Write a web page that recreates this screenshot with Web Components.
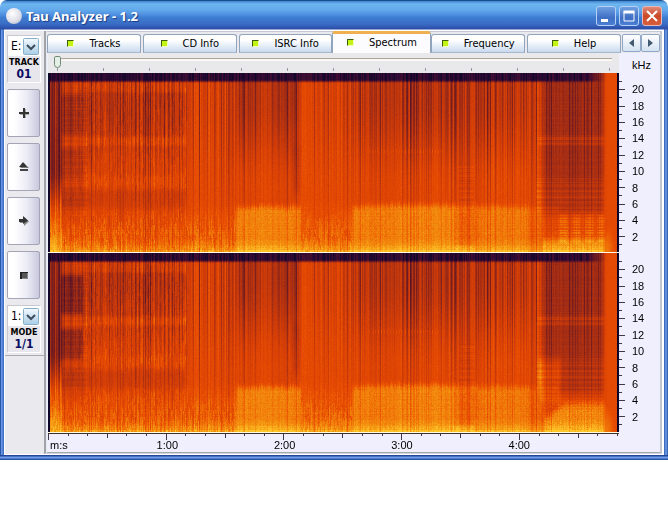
<!DOCTYPE html>
<html lang="en">
<head>
<meta charset="utf-8">
<title>Tau Analyzer - 1.2</title>
<style>
  body { margin: 0; background: #fff; color: #000; font: 11px/16px "DejaVu Sans Condensed", "DejaVu Sans", sans-serif; }
</style>
</head>
<body>
<tau-window heading="Tau Analyzer - 1.2">
  <tau-sidebar slot="side">
    <tau-picker value="E:" caption="TRACK" count="01"></tau-picker>
    <tau-tool label="Add"><svg width="12" height="12" viewBox="0 0 12 12"><path d="M5 2h3v3h3v3H8v3H5V8H2V5h3z" fill="#aaa"/><path d="M5 1h2v4h4v2H7v4H5V7H1V5h4z" fill="#333"/></svg></tau-tool>
    <tau-tool label="Eject"><svg width="12" height="12" viewBox="0 0 12 12"><path d="M6 2l5 5H2z" fill="#777"/><path d="M5 1l4 5H1z" fill="#333"/><path d="M2 8h8v2H2z" fill="#444"/></svg></tau-tool>
    <tau-tool label="Next"><svg width="12" height="12" viewBox="0 0 12 12"><path d="M2 5h4V2l5 4.500-5 4.500V8H2z" fill="#888"/><path d="M1 4h4V1l5 4.500L5 9V7H1z" fill="#333"/></svg></tau-tool>
    <tau-tool label="Stop"><svg width="12" height="12" viewBox="0 0 12 12"><path d="M2 3h8v7H2z" fill="#888"/><path d="M2 3h8v1H4v6H2z" fill="#222"/><path d="M4 4h5v5H4z" fill="#555"/></svg></tau-tool>
    <tau-picker value="1:" caption="MODE" count="1/1"></tau-picker>
  </tau-sidebar>
  <tau-tabs slot="tabs">
    <tau-tab>Tracks</tau-tab>
    <tau-tab>CD Info</tau-tab>
    <tau-tab>ISRC Info</tau-tab>
    <tau-tab active>Spectrum</tau-tab>
    <tau-tab>Frequency</tau-tab>
    <tau-tab>Help</tau-tab>
  </tau-tabs>
  <tau-spectrum></tau-spectrum>
</tau-window>

<script>
const define = (name, html, setup) => {
  const template = document.createElement('template');
  template.innerHTML = html;
  customElements.define(name, class extends HTMLElement {
    constructor() {
      super();
      this.attachShadow({ mode: 'open' }).append(template.content.cloneNode(true));
    }
    connectedCallback() { if (setup) setup(this, this.shadowRoot); }
  });
};

define('tau-window', `
<style>
  :host { display: block; box-sizing: border-box; padding: 0 4px 5px;
    border-radius: 7px 7px 0 0;
    background:
      linear-gradient(#17508f 0 1px, #3f83d2 1px, #6eb6ee 4px, #62a9ec 10px, #4f8edf 15px, #3f7fd2 17px, #3a6cc4 24px, #2b4ca8 29px, transparent 30px) 0 0 / 100% 30px no-repeat,
      linear-gradient(0deg, #2a56a8 0 1px, #6f9fe8 2px, #6f9fe8 3px, #24459a 4px, #24459a 5px, transparent 5px),
      linear-gradient(90deg, #2a56a8 0 1px, #6f9fe8 1px, #4a7bd4 3px, #3a64b8 4px, #fff 4px calc(100% - 4px), #2f59b4 calc(100% - 4px), #6f9fe8 calc(100% - 2px), #2a56a8); }
  header { display: flex; align-items: center; height: 30px; padding: 2px 2px 0 2px; box-sizing: border-box; gap: 4px; }
  .orb { width: 16px; height: 16px; border-radius: 50%; flex: none;
    background: radial-gradient(circle at 40% 35%, #fff, #dedfe8 55%, #9fa6c0); }
  h1 { flex: 1; margin: 0; color: #fff; font: bold 13px/18px "Noto Sans", "Open Sans", sans-serif; text-shadow: 1px 1px 1px #1c3c88; }
  .controls { display: flex; gap: 3px; }
  button { width: 20px; height: 20px; padding: 0; border: 1px solid #b4d0f4; border-radius: 3px;
    background: linear-gradient(#6f9fe0, #3f6fc4 60%, #4a7fd4); display: grid; place-items: center; }
  .close { background: linear-gradient(#e08a78, #cc4a28 50%, #d8603c); border-color: #e8b8b8; }
  .body { display: flex; border: 1px solid #fff; border-width: 1px 2px 1px 1px; background: #e9e9ee; }
  .main { flex: 1; min-width: 0; box-sizing: border-box; border-left: 2px solid #a0a3aa; border-right: 2px solid #c0c4d0; border-bottom: 1px solid #d0d4dc; padding: 0 0 0 1px; }
</style>
<header>
  <span class="orb"></span><h1></h1>
  <div class="controls">
    <button aria-label="Minimize"><svg width="14" height="14"><path d="M2 10h7v3H2z" fill="#fff"/></svg></button>
    <button aria-label="Maximize"><svg width="14" height="14"><path d="M2 3h10v9H2z" fill="none" stroke="#fff"/><path d="M1.500 3h11" stroke="#fff" stroke-width="3"/></svg></button>
    <button class="close" aria-label="Close"><svg width="14" height="14"><path d="M2 2l10 10M12 2L2 12" stroke="#fff" stroke-width="2"/></svg></button>
  </div>
</header>
<div class="body">
  <slot name="side"></slot>
  <div class="main"><slot name="tabs"></slot><slot></slot></div>
</div>`, (el, root) => { root.querySelector('h1').textContent = el.getAttribute('heading'); });

define('tau-sidebar', `
<style>
  :host { display: block; flex: none; width: 39px; }
  .tools { display: flex; flex-direction: column; gap: 6px; padding: 4px 4px 2px 2px; border-bottom: 1px solid #aaaab0; }
</style>
<div class="tools"><slot></slot></div>`);

define('tau-picker', `
<style>
  :host { display: flex; flex-direction: column; align-items: center; box-sizing: border-box; height: 48px; margin-right: -1px;
    border: 1px solid #fff; border-color: #c8c8d0 #fff #fff #c8c8d0; background: #e6e6ec; }
  label { position: relative; display: block; align-self: stretch; background: #fff; height: 20px; }
  select { appearance: none; width: 100%; height: 20px; box-sizing: border-box; border: 0; margin: 0; padding: 0 16px 0 3px; background: transparent; color: #000; font: inherit; font-size: 12px; border-radius: 0; }
  svg { position: absolute; right: 1px; top: 2px; pointer-events: none; }
  .caption { font: bold 8px/10px "DejaVu Sans", sans-serif; padding-top: 2px; }
  output { font: bold 12px/13px "DejaVu Sans Condensed", sans-serif; color: #0a0a60; }
</style>
<label><select><option></option></select>
<svg width="16" height="17"><defs><linearGradient id="g" x2="0" y2="1"><stop stop-color="#f4faff"/><stop offset="1" stop-color="#a8cde6"/></linearGradient></defs><rect x="0.500" y="0.500" width="15" height="16" rx="1" fill="url(#g)" stroke="#88aec8"/><path d="M4 7l4 4 4-4" fill="none" stroke="#3c4c5c" stroke-width="2"/></svg></label>
<span class="caption"></span><output></output>`, (el, root) => {
  root.querySelector('option').textContent = el.getAttribute('value');
  root.querySelector('select').setAttribute('aria-label', el.getAttribute('caption'));
  root.querySelector('.caption').textContent = el.getAttribute('caption');
  root.querySelector('output').textContent = el.getAttribute('count');
});

define('tau-tool', `
<style>
  :host { display: block; }
  button { display: grid; place-items: center; width: 100%; height: 48px; padding: 0; border: 1px solid #a4a4b4; border-radius: 2px;
    background: linear-gradient(90deg, #fff 20%, #ececf6 60%, #c8c8de); }
</style>
<button><slot></slot></button>`, (el, root) => root.querySelector('button').setAttribute('aria-label', el.getAttribute('label')));

define('tau-tabs', `
<style>
  :host { display: flex; align-items: flex-end; height: 21px; border-top: 1px solid #c4c8d0; }
  nav { display: flex; flex: 1; align-items: flex-end; gap: 2px; min-width: 0; }
  .scroll { display: flex; flex: none; padding: 0 0 1px 1px; }
  .scroll button { width: 19px; height: 18px; padding: 0; border: 1px solid #90a8c4; border-radius: 2px; background: linear-gradient(#fff, #d4e2f2); display: grid; place-items: center; }
</style>
<nav role="tablist"><slot></slot></nav>
<div class="scroll">
  <button aria-label="Previous tabs"><svg width="7" height="8"><path d="M6 0v8L1 4z" fill="#445a70"/></svg></button>
  <button aria-label="Next tabs"><svg width="7" height="8"><path d="M1 0v8l5-4z" fill="#445a70"/></svg></button>
</div>`);

define('tau-tab', `
<style>
  :host { display: block; flex: 1 1 0; min-width: 0; }
  button { display: flex; align-items: center; justify-content: center; gap: 15px; box-sizing: border-box; width: 100%; height: 19px; padding: 0;
    border: 1px solid #90a4bc; border-bottom-color: #a8b8cc; border-radius: 3px 3px 0 0; background: linear-gradient(#fff 30%, #e0eaf6 70%, #c8daee);
    color: #000; font: inherit; white-space: nowrap; }
  i { width: 7px; height: 7px; box-sizing: border-box; border: 1px solid; border-color: #3c5c10 #f4fcc0 #f4fcc0 #3c5c10; background: #c4f414; }
  :host([active]) { flex-basis: 5px; margin: 0 -2px; }
  :host([active]) button { height: 22px; padding-bottom: 2px; border-top: 3px solid #eeb050; border-bottom: 0; background: #fcfcff; }
</style>
<button role="tab"><i></i><slot></slot></button>`, (el, root) =>
  root.querySelector('button').setAttribute('aria-selected', el.hasAttribute('active')));

define('tau-seek', `
<style>
  :host { display: block; background: #e9e9ec; padding: 3px 7px 0 6px; height: 17px; }
  input { appearance: none; display: block; width: 100%; height: 12px; margin: 0; background: linear-gradient(#b0a8a0 1px, #f4f0ea 1px, #fff 3px) 3px 2px / 100% 3px no-repeat; }
  input::-webkit-slider-thumb { appearance: none; width: 7px; height: 12px; border: 1px solid #708878; border-radius: 2px 2px 4px 4px; background: #e4f0e6; }
  svg { display: block; width: calc(100% - 6px); height: 4px; margin-left: 3px; overflow: visible; }
</style>
<input type="range" min="0" max="12" value="0" aria-label="Position"><svg></svg>`, (el, root) => {
  let marks = '';
  for (let i = 0; i <= 12; i++) marks += `<rect x="${i / 12 * 100}%" y="0" width="1" height="3" fill="#9a9aa2"/>`;
  root.querySelector('svg').innerHTML = marks;
});

const NYQUIST = 22.05;
define('tau-channel', `
<style>
  :host { display: flex; height: 180px; }
  canvas { display: block; flex: 1; min-width: 0; height: 179px; border-bottom: 1px solid #fffbe8; }
  .axis { display: flex; width: 41px; flex: none; gap: 6px; }
  svg { width: 7px; height: 100%; display: block; }
  ol { list-style: none; margin: 0; padding: 0; display: flex; flex-direction: column; height: 100%; font: 11px/16px "Liberation Sans", Arial, sans-serif; }
  li { flex: 2 1 0; min-height: 0; display: flex; align-items: center; }
</style>
<canvas width="571" height="179"></canvas>
<div class="axis"><svg></svg><ol></ol></div>`, (el, root) => {
  let ticks = '';
  for (let k = 1; k <= 21; k++) {
    const y = (1 - k / NYQUIST) * 100 + '%';
    ticks += `<line x1="0" x2="${k % 2 ? 3 : 6}" y1="${y}" y2="${y}" stroke="#403848" shape-rendering="crispEdges"/>`;
  }
  root.querySelector('svg').innerHTML = ticks;
  let rows = `<li style="flex-grow:1" aria-hidden="true"></li>`;
  for (let k = 20; k >= 2; k -= 2) rows += `<li>${k}</li>`;
  root.querySelector('ol').innerHTML = rows + `<li style="flex-grow:1" aria-hidden="true"></li>`;
  paint(root.querySelector('canvas'), Number(el.getAttribute('index')));
});

function paint(canvas, channel) {
  let seed = 7919;
  const rnd = () => {
    seed = (seed + 0x6D2B79F5) | 0;
    let t = Math.imul(seed ^ (seed >>> 15), 1 | seed);
    t = (t + Math.imul(t ^ (t >>> 7), 61 | t)) ^ t;
    return ((t ^ (t >>> 14)) >>> 0) / 4294967296;
  };
  const W = canvas.width, H = canvas.height, ctx = canvas.getContext('2d'), img = ctx.createImageData(W, H);
  const stops = [[0, 14, 6, 40], [.14, 50, 10, 52], [.32, 116, 28, 30], [.46, 162, 44, 20], [.6, 208, 60, 8], [.7, 232, 76, 2], [.8, 240, 116, 8], [.9, 244, 152, 18], [1, 255, 200, 44]];
  const ramp = v => {
    v = Math.min(1, Math.max(0, v));
    let i = 1;
    while (v > stops[i][0]) i++;
    const a = stops[i - 1], b = stops[i], t = (v - a[0]) / (b[0] - a[0]);
    return [1, 2, 3].map(n => a[n] + (b[n] - a[n]) * t);
  };
  const smooth = (a, b, v) => { v = Math.min(1, Math.max(0, (v - a) / (b - a))); return v * v * (3 - 2 * v); };
  const box = (x, y, x0, x1, y0, y1, soft = 4) =>
    smooth(x0 - 2, x0 + 2, x) * (1 - smooth(x1 - 2, x1 + 2, x)) * smooth(y0 - soft, y0 + soft, y) * (1 - smooth(y1 - soft, y1 + soft, y));
  // [start, end, top level, middle level, level under 5 kHz, stripe strength]
  const parts = [
    [0, 14, .40, .36, .74, .12], [14, 36, .55, .60, .74, .08], [36, 138, .55, .66, .74, .10], [138, 188, .64, .68, .76, .09],
    [188, 214, .50, .66, .84, .10], [214, 222, .58, .68, .84, .09], [222, 252, .49, .65, .83, .10], [252, 304, .63, .68, .76, .09],
    [304, 350, .53, .66, .82, .12], [350, 410, .51, .67, .84, .13],
    [410, 428, .55, .65, .76, .12], [428, 480, .54, .68, .81, .13], [480, 495, .62, .67, .76, .10], [495, 557, .46, .48, .70, .03], [557, 571, .69, .69, .69, .02]];
  const column = Array.from({ length: W }, (_, x) => {
    const sum = [0, 0, 0, 0, 0, 0];
    for (let d = -2; d <= 2; d++) {
      const at = Math.min(W - 1, Math.max(0, x + d)), q = parts.find(part => at < part[1]);
      for (let n = 2; n < 6; n++) sum[n] += q[n] / 5;
    }
    return sum;
  });
  const streak = Array.from({ length: W }, () => [rnd() - .5, Math.pow(rnd(), 6), rnd() - .5]);
  const rowNoise = Array.from({ length: H }, () => rnd() - .5);
  const local = new Float32Array(W).map(() => rnd() - .5);
  for (let y = 0; y < H; y++) for (let x = 0; x < W; x++) {
    const p = column[x], s = streak[x], fromBottom = H - y;
    if (rnd() < .16) local[x] = rnd() - .5;
    const upper = p[2] + (p[3] - p[2]) * smooth(25, 115, y);
    let v = upper + s[0] * p[5] * 1.5 * (1 - smooth(30, 140, y) * .75) - s[1] * .22 * (1 - smooth(40, 170, y) * .6);
    v += Math.sin(x * 1.57) * .018 * (1 - smooth(40, 170, y) * .6);
    if (x >= 12 && x < 140) {
      v += local[x] * .10 * smooth(12, 40, x);
      v += .07 * box(x, y, 14, 138, 8, 19, 2) + .07 * box(x, y, 14, 138, 63, 72, 3) + .03 * box(x, y, 14, 138, 102, 113, 4);
      v -= box(x, y, 14, 138, 117, 136, 4) * (.03 + Math.max(0, local[x]) * .16);
      v += box(x, y, 14, 40, 8, 140) * rowNoise[y] * .06;
      v -= (channel ? .15 : .06) * (box(x, y, 12, 34, 22, 60, 3) + box(x, y, 12, 34, 76, 106, 3));
    }
    v -= .06 * box(x, y, 244, 252, 70, 120, 8);
    v += .03 * box(x, y, 320, 395, 76, 80, 1) * (x % 3 ? 0 : 2);
    v += box(x, y, 410, 426, 90, 180) * rowNoise[y] * .08;
    if (x >= 488 && x < 557) {
      v += rowNoise[y] * .03 + Math.max(0, Math.sin(x * 2.1)) * .025;
      v += box(x, y, 490, 557, 62, 71, 2) * (.07 + rowNoise[y] * .08);
      v += smooth(102, 108, y) * (.05 + rowNoise[y] * .08);
      v += channel * box(x, y, 490, 512, 106, 150, 8) * .12;
      v -= .05 * box(x, y, 510, 557, 133, 139, 2);
      v += .1 * smooth(138, 146, y);
    }
    if (x < 14) v += (x % 5 === 2 || x === 9 ? .14 : -.04) + smooth(95, 140, y) * .28;
    const edge = 47 + s[2] * 4 - smooth(300, 350, x) * (1 - smooth(420, 440, x)) * -2;
    const sharp = smooth(184, 192, x) * (1 - smooth(252, 254, x)) + smooth(302, 306, x) * (1 - smooth(490, 494, x));
    const mix = sharp * (1 - smooth(edge - 7, edge + 4, fromBottom)) + (1 - sharp) * smooth(56, 12, fromBottom);
    const wet = x < 557 ? 1 : 0;
    const gentle = x < 188 || (x > 252 && x < 304) ? 1 : 0;
    const base = (p[4] + (rnd() - .5) * .055 - s[1] * .10 + s[0] * .05 + rowNoise[y] * .025);
    if (wet) v = v * (1 - mix) + base * mix;
    if (gentle && mix > .02) v += local[x] * .12 * mix;
    if (x < 14) v += .08 * mix;
    if (!channel) {
      for (const start of [511, 524, 537, 549]) v += .10 * box(x, y, start, start + 8, 141, 170, 3) * (.8 + rowNoise[y] * .8);
      v += .14 * box(x, y, 494, 560, 166, 182, 5);
    } else {
      const rise = 150 + 14 * (1 - smooth(496, 520, x));
      v += .16 * box(x, y, 496, 560, rise, 190, 6) + (rnd() - .5) * .06 * box(x, y, 496, 560, 146, 190, 6);
    }
    v += (x < 557 ? .12 : .02) * smooth(x < 14 ? 24 : 15, 1, fromBottom);
    v += .07 * box(x, y, 406, 426, 172, 185, 2);
    if (fromBottom < 3 && x < 557) v += .04;
    v += (rnd() - .5) * .04;
    const tail = smooth(552, 560, x);
    v = v * (1 - tail) + tail * (.685 + (rnd() - .5) * .025 + smooth(30, 2, fromBottom) * .12 * smooth(568, 558, x));
    const darkTop = (1 - smooth(6, 10, y)) * (1 - smooth(533, 560, x));
    v = v * (1 - darkTop) + (.10 + s[0] * .17 + (rnd() - .5) * .04) * darkTop;
    if (x < 2 || x > 568) v = 0;
    const c = ramp(v), o = (y * W + x) * 4;
    img.data[o] = c[0]; img.data[o + 1] = c[1]; img.data[o + 2] = c[2]; img.data[o + 3] = 255;
  }
  ctx.putImageData(img, 0, 0);
}

define('tau-time-axis', `
<style>
  :host { display: block; margin-right: 41px; border-top: 1px solid #403020; }
  svg { display: block; width: 100%; height: 5px; overflow: visible; }
  ol { display: flex; list-style: none; margin: 0; padding: 0 0 0 2px; font: 11px/13px "Liberation Sans", Arial, sans-serif; }
  li { flex: 60 1 0; min-width: 0; text-align: center; }
  .unit { flex-grow: 30; text-align: left; }
  .rest { flex-grow: 21; }
</style>
<svg></svg>
<ol><li class="unit">m:s</li><li>1:00</li><li>2:00</li><li>3:00</li><li>4:00</li><li class="rest" aria-hidden="true"></li></ol>`, (el, root) => {
  let ticks = '';
  for (let t = 0; t <= 290; t += 10) {
    ticks += `<rect x="${t / 291 * 100}%" y="0" width="1" height="${t % 60 === 0 ? 6 : t % 30 === 0 ? 4 : 2}" fill="#403848" shape-rendering="crispEdges"/>`;
  }
  root.querySelector('svg').innerHTML = ticks;
});

define('tau-spectrum', `
<style>
  :host { display: block; background: #f0effe; padding: 0 0 0 1px; border-bottom: 1px solid #a4a8a8; }
  .top { display: flex; }
  tau-seek { flex: 1; }
  .unit { width: 41px; box-sizing: border-box; padding: 4px 0 0 13px; font: 11px/16px "Liberation Sans", Arial, sans-serif; }
</style>
<div class="top"><tau-seek></tau-seek><span class="unit">kHz</span></div>
<tau-channel index="0"></tau-channel>
<tau-channel index="1"></tau-channel>
<tau-time-axis></tau-time-axis>`);
</script>
</body>
</html>
